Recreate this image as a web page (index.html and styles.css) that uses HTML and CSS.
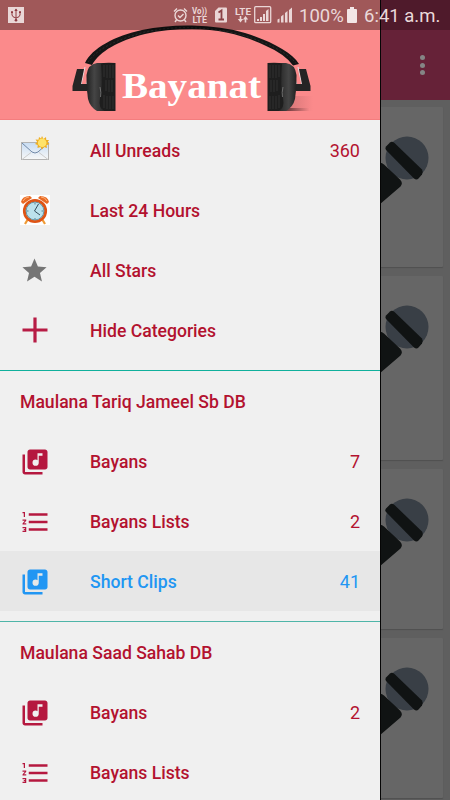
FILE: index.html
```html
<!DOCTYPE html>
<html lang="en">
<head>
<meta charset="utf-8">
<title>Bayanat</title>
<link rel="stylesheet" href="styles.css">
</head>
<body>
<svg width="0" height="0" class="defs">
  <symbol id="mic" viewBox="0 0 80 100">
    <circle cx="57" cy="51" r="21.5" fill="#393f46"/>
    <path d="M0 84 27 56.500Q31 54.500 34 57.500L50 72.500Q53.500 76 50.500 79.500L22 104H0Z" fill="#101313"/>
    <path d="M36 43Q34.700 41 36 39.500L40 35.500Q42 34 44.500 36L72 62.500Q73.500 65 72 67.500L68.500 71.500Q66.500 73.500 64 71.500Z" fill="#101313"/>
  </symbol>
  <symbol id="library" viewBox="0 0 24 24">
    <path fill="currentColor" d="M20 2H8c-1.100 0-2 .9-2 2v12c0 1.100.9 2 2 2h12c1.100 0 2-.9 2-2V4c0-1.100-.9-2-2-2zm-2 5h-3v5.500a2.500 2.500 0 1 1-2.500-2.500c.57 0 1.080.19 1.500.51V5h4v2zM4 6H2v14c0 1.100.9 2 2 2h14v-2H4V6z"/>
  </symbol>
  <symbol id="numbers" viewBox="0 0 24 24">
    <path fill="currentColor" d="M2 17h2v.5H3v1h1v.5H2v1h3v-4H2v1zm1-9h1V4H2v1h1v3zm-1 3h1.800L2 13.100v.9h3v-1H3.200L5 10.900V10H2v1zm5-6v2h15V5H7zm0 14h15v-2H7v2zm0-6h15v-2H7v2z"/>
  </symbol>
</svg>
<div class="screen">
  <main class="page">
    <header class="toolbar"><span class="more"><i></i><i></i><i></i></span></header>
    <div class="cards">
      <div class="card"><svg class="mic"><use href="#mic"/></svg></div>
      <div class="card tall"><svg class="mic"><use href="#mic"/></svg></div>
      <div class="card"><svg class="mic"><use href="#mic"/></svg></div>
      <div class="card"><svg class="mic"><use href="#mic"/></svg></div>
    </div>
  </main>

  <nav class="drawer">
    <svg class="banner" width="380" height="120" viewBox="0 0 380 120">
      <defs>
        <linearGradient id="cup"><stop offset="0" stop-color="#202020"/><stop offset=".4" stop-color="#454545"/><stop offset=".8" stop-color="#2d2d2d"/><stop offset="1" stop-color="#222"/></linearGradient>
        <linearGradient id="shadow"><stop offset="0" stop-color="#5b3033"/><stop offset="1" stop-color="#fb8a8b"/></linearGradient>
        <g id="earcup">
          <path d="M85 67 81 85M91 67 86 86" stroke="#ddd" stroke-width="1"/>
          <path d="M77 69H84L81 84H87V91H72.500V86Z" fill="#242424"/>
          <path d="M97 63Q88 64 86.500 75Q86 86 88 99Q90 107 97 111H106V63Z" fill="url(#cup)"/>
          <path d="M101 64Q104 62 115.500 63V111H105Q98 109 100 98Q103 86 101 64Z" fill="#1e1e1e"/>
          <path d="M104 65V77M107 65V78M110 65V78M113 65V78M106 80V91M109 80V92M112 80V92M104 95V108M107 96V109M110 96V109M113 96V109" stroke="#363636" stroke-width=".8"/>
          <path d="M100 87Q101.500 93 100.500 97" stroke="#888" stroke-width=".7" fill="none"/>
        </g>
      </defs>
      <rect width="380" height="120" fill="#fb8a8b"/>
      <rect y="119" width="380" height="1" fill="#f47d7e"/>
      <path d="M290 96H313V111H284Z" fill="url(#shadow)" opacity=".25"/>
      <path d="M284 108H310V111H284Z" fill="url(#shadow)"/>
      <path d="M85 63C92 48 115 36 142 30Q166 25 192 25.500Q222 26 245 33C270 41 292 52 299 64L293 65.500Q285 54 264 45C245 36 220 29 192 29Q166 29 145 34C118 41 100 51 92 65Z" fill="#151515"/>
      <path d="M88 62C98 48 116 40 145 32Q190 22 242 35C268 43 286 52 296 63" fill="none" stroke="#333" stroke-width=".7" stroke-dasharray="2 2"/>
      <use href="#earcup"/>
      <use href="#earcup" transform="translate(383 0) scale(-1 1)"/>
      <text class="brand" x="122" y="98" textLength="139" lengthAdjust="spacingAndGlyphs">Bayanat</text>
      <rect width="380" height="30" fill="#000" opacity=".36"/>
    </svg>

    <a class="row">
      <svg class="icon" viewBox="0 0 30 30"><defs><linearGradient id="mail" x2="0" y2="1"><stop stop-color="#c7dcf3"/><stop offset="1" stop-color="#f8f8f8"/></linearGradient></defs>
        <rect x="1.500" y="7.500" width="27" height="17" fill="url(#mail)" stroke="#b3b3b3"/>
        <path d="M2 24.500 11 17.500M28 24.500 19 17.500" stroke="#ccc"/>
        <path d="M2 8 12 17Q15 19 18 17L28 8" fill="none" stroke="#7189a8"/>
        <path d="M22 1 23.500 4 26 2 26.300 5 29 5 27.500 7.500 29.500 9 26.500 10.300 27 13 24 12 22 14.500 20.500 12 17.500 13 17.700 10 15 9 17.200 7 15.500 4.500 18.500 4.700 19 2 21 3.500Z" fill="#efae21"/>
        <circle cx="22.200" cy="7.700" r="4.300" fill="#ffe36a"/></svg>
      <span class="label">All Unreads</span><span class="count">360</span></a>
    <a class="row">
      <svg class="icon" viewBox="0 0 30 30"><rect width="30" height="30" fill="#fff"/>
        <path d="M8 24 5 29M22 24 25 29" stroke="#ef9b36" stroke-width="2.200"/>
        <path d="M1 7Q2 1 10 1L12 3 3 9ZM29 7Q28 1 20 1L18 3 27 9Z" fill="#e96a24"/>
        <path d="M3 6Q5 2 9 2M27 6Q25 2 21 2" stroke="#ffb278" fill="none"/>
        <circle cx="15" cy="16" r="10.700" fill="#bce2ec" stroke="#df5415" stroke-width="2.800"/>
        <circle cx="15" cy="16" r="8.900" fill="none" stroke="#46788b" stroke-width=".7"/>
        <path d="M18.500 9 14.500 16 20 20" fill="none" stroke="#344e5b" stroke-width="1"/>
        <path d="M15 8V9.500M15 23V24.500M7 16H8.500M21.500 16H23" stroke="#5a8290"/></svg>
      <span class="label">Last 24 Hours</span></a>
    <a class="row">
      <svg class="icon star" viewBox="0 0 24 24"><path fill="#757575" d="M12 17.270 18.180 21l-1.640-7.030L22 9.240l-7.190-.61L12 2 9.190 8.630 2 9.240l5.460 4.730L5.820 21z"/></svg>
      <span class="label">All Stars</span></a>
    <a class="row">
      <svg class="icon" viewBox="0 0 30 30"><path d="M15 2.500V27.500M2.500 15H27.500" stroke="#b71c45" stroke-width="3.200"/></svg>
      <span class="label">Hide Categories</span></a>

    <section class="group">
      <h2>Maulana Tariq Jameel Sb DB</h2>
      <a class="row"><svg class="icon"><use href="#library"/></svg><span class="label">Bayans</span><span class="count">7</span></a>
      <a class="row"><svg class="icon"><use href="#numbers"/></svg><span class="label">Bayans Lists</span><span class="count">2</span></a>
      <a class="row active"><svg class="icon"><use href="#library"/></svg><span class="label">Short Clips</span><span class="count">41</span></a>
    </section>
    <section class="group">
      <h2>Maulana Saad Sahab DB</h2>
      <a class="row"><svg class="icon"><use href="#library"/></svg><span class="label">Bayans</span><span class="count">2</span></a>
      <a class="row"><svg class="icon"><use href="#numbers"/></svg><span class="label">Bayans Lists</span></a>
    </section>
  </nav>

  <div class="status">
    <svg class="usb" width="16" height="16" viewBox="0 0 16 16"><rect width="16" height="16" fill="#e9d7d7"/><path d="M8 2V14M4 5V8Q4 10 8 11Q12 10 12 8V5" fill="none" stroke="#8e3a40" stroke-width="1"/><path d="M6.300 4 8 1.500 9.700 4Z" fill="#8e3a40"/><circle cx="8" cy="13.300" r="1.300" fill="#8e3a40"/><path d="M3 4.300H5V6H3ZM11 4.300H13V6H11Z" fill="#8e3a40"/></svg>
    <svg class="signals" width="126" height="30" viewBox="172 0 126 30">
      <g fill="none" stroke="#ead6d6" stroke-width="1.400"><circle cx="180.500" cy="15.500" r="5.500"/><path d="M174 11.500 177 8.500M187 11.500 184 8.500M178 15.500 180 17.500 183.500 14M176.500 20 175 22M184.500 20 186 22"/></g>
      <g fill="#ead6d6" class="tiny">
        <text x="192" y="14" textLength="15" lengthAdjust="spacingAndGlyphs">Vo))</text><text x="192.500" y="22.500" textLength="14.500" lengthAdjust="spacingAndGlyphs">LTE</text>
        <text x="235" y="15" textLength="16" lengthAdjust="spacingAndGlyphs">LTE</text>
        <path d="M218.500 7.500H226Q227 7.500 227 8.500V21.500Q227 22.500 226 22.500H216Q215 22.500 215 21.500V11Z"/>
        <path d="M240.500 22.500 237.800 19H239.700V16H241.300V19H243.200ZM245.500 16 242.900 19.500H244.700V22.500H246.300V19.500H248.200Z"/>
        <path d="M257 21V19H259V21ZM260 21V17H262V21ZM263 21V14H265V21ZM266 21V11L268.500 9V21Z"/>
        <path d="M277.500 22.500V19.500L279.500 18.500V22.500ZM281 22.500V16.500L283.500 14.500V22.500ZM285 22.500V13L287.500 11V22.500ZM289 22.500V10L292 7.500V22.500Z"/>
      </g>
      <path d="M218.500 12.500 221.500 10.500V19.500M218.500 19.500H224" fill="none" stroke="#8b4145" stroke-width="1.800"/>
      <rect x="254.700" y="6.700" width="16" height="16" rx="1" fill="none" stroke="#ead6d6" stroke-width="1.300"/>
    </svg>
    <span class="percent">100%</span>
    <svg class="battery" width="10" height="16" viewBox="0 0 10 16"><path fill="#f3e6e6" d="M3 0H7V2H9Q10 2 10 3V15Q10 16 9 16H1Q0 16 0 15V3Q0 2 1 2H3Z"/></svg>
    <span class="time">6:41 a.m.</span>
  </div>
</div>
</body>
</html>
```

FILE: styles.css
```css
* { box-sizing: border-box; }
body { margin: 0; font-family: Roboto, "Liberation Sans", sans-serif; }
.defs { position: absolute; }
.screen { position: relative; width: 450px; height: 800px; overflow: hidden; background: #5f5f5f; }

.page { display: flex; flex-direction: column; }
.toolbar { height: 100px; padding: 30px 25px 0 0; background: linear-gradient(#4f1a2b 30px, #662238 30px); display: flex; justify-content: flex-end; align-items: center; }
.more { display: flex; flex-direction: column; gap: 2.5px; }
.more i { width: 5px; height: 5px; border-radius: 50%; background: #858585; }
.cards { display: flex; flex-direction: column; gap: 9px; padding: 7px 7px 0; }
.card { height: 160px; padding-left: 343px; background: #666; border-radius: 1px; box-shadow: 0 1px 1px #505050; }
.card.tall { height: 184px; }
.mic { display: block; width: 80px; height: 100px; }

.drawer { position: absolute; top: 0; left: 0; width: 381px; height: 800px; overflow: hidden; background: #f0f0f0; border-right: 1px solid #050505; }
.banner { display: block; }
.brand { font: bold 35px "Liberation Serif", serif; fill: #fff; }
.row { display: flex; align-items: center; height: 60px; padding: 0 20px; color: #b3122f; font-size: 18px; }
.icon { width: 30px; height: 30px; margin-right: 40px; color: #b5183f; }
.icon.star { width: 29px; height: 29px; margin-right: 41px; }
.group .icon { margin-top: 1px; }
.label { flex: 1; font-weight: 500; font-size: 17.6px; padding-top: 1px; }
.count { padding-top: 1px; }
.active { background: #e7e7e7; color: #2196f3; }
.active .icon { color: #2196f3; }
.group { margin-top: 10px; border-top: 1px solid #10b09c; }
.group + .group { border-top-color: #4fb5a8; }
.group h2 { margin: 0; height: 60px; padding: 1px 20px 0; line-height: 60px; font-size: 17.6px; font-weight: 500; color: #b3122f; }

.status { position: absolute; top: 0; left: 0; width: 450px; height: 30px; display: flex; align-items: center; color: #ead9da; font-size: 18.5px; white-space: nowrap; }
.usb { margin-left: 8px; }
.signals { margin-left: 148px; }
.percent { width: 49px; padding: 1px 0 0 1px; }
.battery { margin-right: 7px; }
.time { padding-top: 1px; }
.tiny { font: bold 9px Roboto, sans-serif; }
```
